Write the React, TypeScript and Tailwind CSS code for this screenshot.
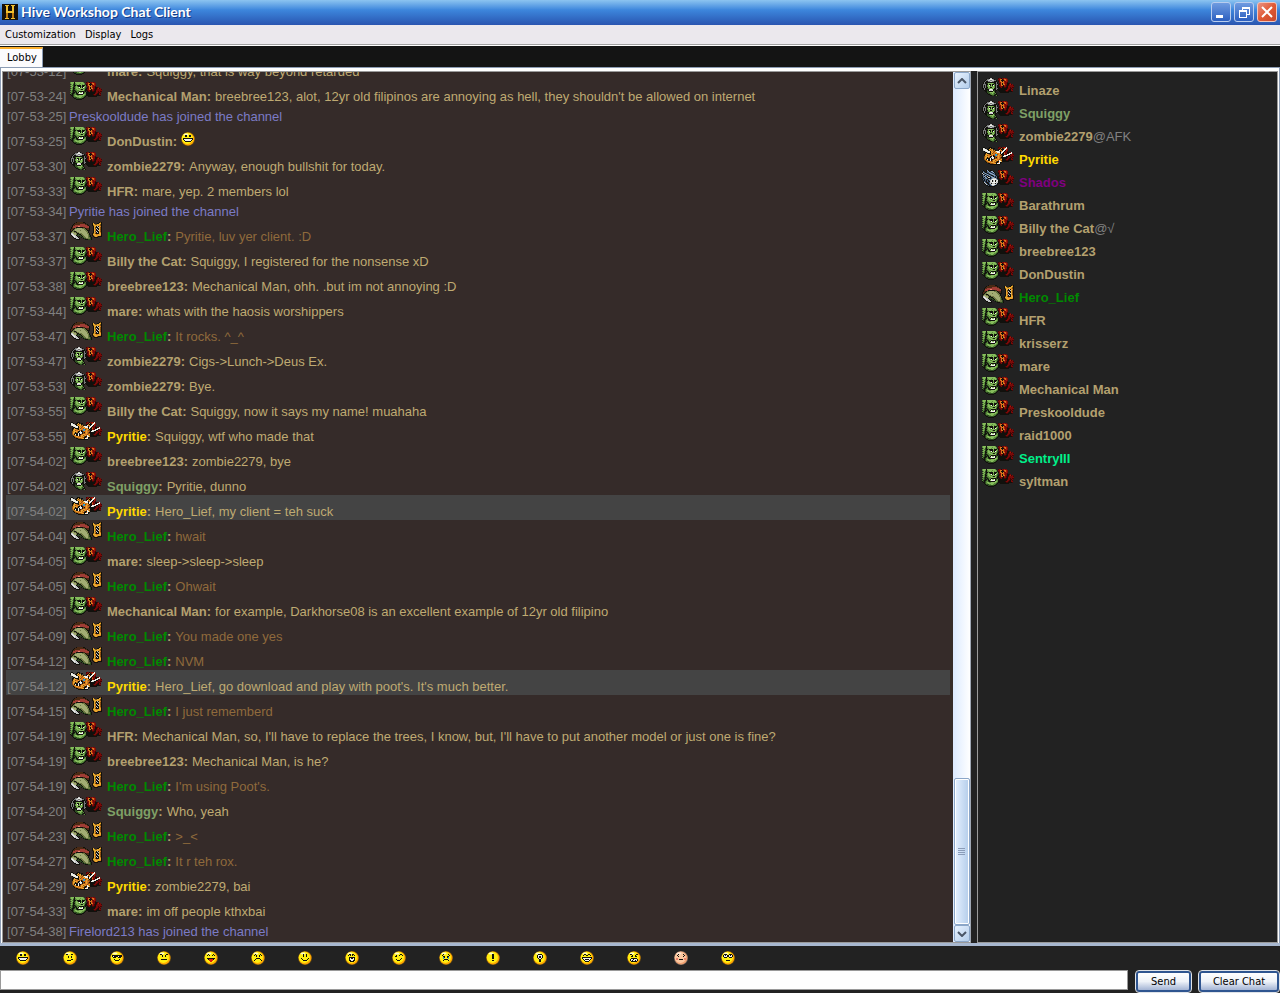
import { useState } from "react";

const palette: Record<string, string> = {
  k: "#11100c",
  g: "#5a8c3c",
  G: "#86bc5c",
  d: "#2c4a20",
  q: "#6e7a44",
  Q: "#a3ad74",
  m: "#420505",
  r: "#7a0a08",
  R: "#a81c0c",
  o: "#d9741c",
  O: "#9a4e10",
  y: "#e8a830",
  Y: "#7a5410",
  w: "#f2f2ea",
  s: "#77797a",
  S: "#c4c6c6",
  b: "#4c6482",
  B: "#92a9c4",
  n: "#1c2a40",
  p: "#a03c34",
  t: "#4a2a14",
  c: "#2a9ad0",
  e: "#e02010",
  a: "#e8806c",
};

const banner = [
  "..mrrkrrRrr.......",
  "..rrookrooRr......",
  "..mrokkkRoRr......",
  "..krookorrRr......",
  "...rroooRrrm......",
  "...mrokoRrrkkmr...",
  "..kmrokoorrkkrRmr.",
  "..krrookRrmkmrrrrm",
  "..kmrrmkrrmkrrrrrr",
  "...kmrkkmmkkrrmrmm",
  "...kkkkkkkkmrrmmr.",
  "..kkkkkkkkkrrmkrm.",
  "..kkkkkkkmrrmkkrr.",
  "...kkkkkkkmmkkkkm.",
  "....kkkkkkkkk.....",
];

const jar = [
  ".......kYk",
  "ky...kkyyk",
  "kyyYYyyyYk",
  "kYyyyyyoYk",
  ".kyykSkyok",
  ".kyYkkSyYk",
  ".kyYSkkyOk",
  ".kyokSkyYk",
  ".kyokkSyOk",
  ".kyYSkkyYk",
  ".kyokSkyok",
  "kYyYkkkyyk",
  "kyyyooyyyk",
  "kYyyyyyyok",
  ".kOyyOkkkk",
  "..kkkk....",
];

const sprites: Record<string, string[]> = {
  orc: [
    "gGGGkGGGGGGGGg....",
    "gGGgkgGGGGgGGGg...",
    ".gGdkggGGgGGgGg...",
    "gGgdkkgkkkkGkkkg..",
    ".gGdkgGgkkkgkkGg..",
    "gGgkdgGGGwkGkwGd..",
    ".ggkkgGGggGGGggd..",
    "gGgkdggGGGgkkGgk..",
    ".gdkkdgggGGGGGdk..",
    "ggdkdkdggkkkkkdk..",
    ".gdkkdkgkwGGwkdgk.",
    "gdkkdgkkGwwwwkggk.",
    "kdkdggdkkkkkkGGgk.",
    ".kkdgGGggGGGGGgdk.",
    "..kdggGGGGGGggdk..",
    "...kdddggGGggdk...",
    "....kkddddddkk....",
    "......kkkkkk......",
  ],
  grunt: [
    ".......kSSk.......",
    "....kssSwwSsk.....",
    "...kssSSssSSssk...",
    "..kskkssSSsskkk...",
    ".kskkkkkkkkkkksk..",
    ".kskkdGGGGGgkksk..",
    "kssskkGkkGkkgkssk.",
    "kskskgGwkGkwgkskk.",
    "kskskgGGgGgGgkskk.",
    "kskskkGGkkGGgkskk.",
    "kkskkdggGGgGkkssk.",
    ".kskkkkSwwSkkksk..",
    "..kkkdkwSSwkdkk...",
    "...kkddkkkkGdk....",
    "....kddgGGGGgk....",
    ".....kddggGgdgk...",
    "......kkdgggdkk...",
    "........kkddk.gk..",
  ],
  beast: [
    ".kk....kkk.........k....w.......",
    "kwSk..kkyk.kk.....k....ww.......",
    "kwwwSkkyYoyk.....k....ww........",
    ".SwwwwkYyoyYok...w...wwk........",
    "..kSwwwwkyooYywwwSk.wwk.........",
    "...kkSwwkoyOoyowwwkwwk.......w..",
    "..kkykkkkyYooOyooykwkk.....www..",
    "..kOyyoYkoyooccYoyokk....wwwk...",
    "..kyyOooyOokOccoyoYOk.wwwwkk....",
    "..YoyyyokkwkkOooyooOkwwSkk......",
    "..OyykoYkSwwkYkoyoOkkk..........",
    "..OyYkkkwkwSkOOoyoYOkk..........",
    "..YokwkkwkkOoyyooOoykk..........",
    "...YoykkwkOyyOoyOwyOk...........",
    "...kYoyyoOOyoyYkkwwyk...........",
    "....kYOooyyyoOkkowkk............",
    "......kkYOOoyykwwwk.............",
    "........kkkkkkkkkk..............",
  ],
  turtle: [
    "......kttttttkk.......",
    "....kttttttttttk......",
    "...kttttttpppppttk....",
    "..kttpppppppppppptk...",
    "..kpppppaapppppppppk..",
    ".ktpppkkkkkkkttppppk..",
    ".kttkqqQQQQQqqqktttk..",
    "kttkqQQQQQQQQQqqkttk..",
    "ktkqqQQQQQqQQQQqqkkk..",
    "kkqqkkqQQQQQQQQQqqk...",
    "kqQQqqkqqQQQQQQQQqk...",
    "kSSQQQqkkqqqQQQQQqqk..",
    "kSwSQQqkdkkqqQQQQQqk..",
    ".kSwSSkddddkqqQQQQqdk.",
    "..kSwSSk.kddkqqQQQqdk.",
    "...kSSSSk..kddqqQQqqdk",
    "....kkSSSk...kddqqqqdk",
    "......kkkk.....kkkdddk",
  ],
  wolf: [
    "nk..kBk.kk........",
    "kbk.kbBknBBk......",
    "kBbkkbbBbnbBk.....",
    "SkbBbknbBBbnbk....",
    "kSbkbBbknbBBbk....",
    "nbkBbnbBbkkbBbk...",
    "kbBbkSknbBbkbnbk..",
    "kbkBbkSSkbBBbkbk..",
    "nkbbBbkknbBSSSbk..",
    "kbkbnkbBbSwwwwSbk.",
    ".nkbkbkbSwkSwkSwk.",
    ".kbnkbnkSwkSwkwSk.",
    ".kSbkknbSSwwwwSSk.",
    "..kSbkkbSkSSSkSkk.",
    "...kSbknbSwwwSbk..",
    "....kkbknbSSbkk...",
    "......kkkkkkk.....",
  ],
};

function Pixels({ rows, x = 0, y = 0 }: { rows: string[]; x?: number; y?: number }) {
  return (
    <>
      {rows.map((row, j) =>
        [...row].map((ch, i) =>
          ch === "." ? null : (
            <rect key={`${j}-${i}`} x={x + i} y={y + j} width="1" height="1" fill={palette[ch]} />
          ),
        ),
      )}
    </>
  );
}

function Avatar({ kind }: { kind: string }) {
  return (
    <svg width="32" height="20" viewBox="0 0 32 20" shapeRendering="crispEdges" className="shrink-0">
      {kind === "turtle" ? <Pixels rows={jar} x={22} y={2} /> : <Pixels rows={banner} x={14} y={2} />}
      <Pixels rows={sprites[kind]} y={2} />
    </svg>
  );
}

// Each face is a 10px wide grid laid over a 14px ball.
const faces: { name: string; rows: string[] }[] = [
  { name: "Grin", rows: ["..kk..kk..", "..kk..kk..", "..........", "kkkkkkkkkk", "kwwwwwwwwk", ".kwwwwwwk.", "..kkkkkk.."] },
  { name: "Confused", rows: [".kk...kk..", "..........", "...k..k...", "...k..k...", "..........", "......kk..", "..kkkk...."] },
  { name: "Cool", rows: ["..........", "kkkkkkkkkk", "kwkkkkwkkk", ".kkk..kkk.", "..........", "..k....k..", "...kkkk..."] },
  { name: "Neutral", rows: [".kk....kk.", "...k..k...", "...k..k...", "..........", "..........", "..kkkkkk..", ".........."] },
  { name: "Tongue", rows: ["..k....k..", ".k.k..k.k.", "..........", "..........", ".kkkkkkkk.", "..keeeek..", "...eeee...", "....ee...."] },
  { name: "Sad", rows: ["..k....k..", ".k.k..k.k.", "...k..k...", "..........", "...kkkk...", "..k....k..", ".k......k."] },
  { name: "Smile", rows: ["...k..k...", "...k..k...", "...k..k...", "..........", ".k......k.", "..k....k..", "...kkkk..."] },
  { name: "Shout", rows: ["..kk.kk...", ".k.k.k.k..", "..........", "..kkkkkk..", "..kwkkwk..", "..kwwwwk..", "..kkwwkk..", "...kkkk..."] },
  { name: "Wink", rows: ["......kk..", "..k..k..k.", ".kk.......", "..........", ".......k..", "..k...k...", "...kkk...."] },
  { name: "Cry", rows: ["..k....k..", ".k......k.", "..kk..kk..", "..ck..kc..", "..c....c..", "...kkkk...", "..k....k.."] },
  { name: "Exclamation", rows: ["....kk....", "....kk....", "....kk....", "....kk....", "....kk....", "..........", "....kk...."] },
  { name: "Idea", rows: ["...kkkk...", "..kwwwwk..", "..kwkkwk..", "..kwkkwk..", "...kwwk...", "....kk....", "....kk....", "....kk...."] },
  { name: "Laugh", rows: ["..kk..kk..", ".k..kk..k.", "..........", "kkkkkkkkkk", "kwwwwwwwwk", ".kwkkkkwk.", "..kwwwwk..", "...kkkk..."] },
  { name: "Angry", rows: [".kk....kk.", "...k..k...", "..kk..kk..", "..........", "..kkkkkk..", ".kwwkwwwk.", ".kwkwwkwk.", "..kkkkkk.."] },
  { name: "Blush", rows: ["..k....k..", ".k......k.", "..k....k..", "..........", "aa......aa", "aa.kkkk.aa", ".........."] },
  { name: "Roll eyes", rows: [".kkk..kkk.", "kwkwkkwkwk", "kwwwkkwwwk", ".kkk..kkk.", "..........", "..........", "...kkkk..."] },
];

function Smiley({ rows, pale = false }: { rows: string[]; pale?: boolean }) {
  return (
    <svg width="14" height="14" viewBox="0 0 14 14">
      <circle cx="7" cy="7" r="7" fill={pale ? "#7a6a60" : "#6a4c14"} />
      <circle cx="7" cy="7" r="6.4" fill={pale ? "#f0a070" : "#ffa800"} />
      <circle cx="6.400" cy="6.400" r="5.600" fill={pale ? "#fcc8a0" : "#ffee10"} />
      <ellipse cx="5" cy="2.500" rx="2.500" ry="1" fill={pale ? "#ffe8d8" : "#fffcc8"} />
      <g shapeRendering="crispEdges">
        <Pixels rows={rows} x={2} y={3} />
      </g>
    </svg>
  );
}

type User = { name: string; kind?: string; color?: string; status?: string };

const TAN = "text-[#b3a06f]";
const GREEN = "text-[#7fa066]";
const GOLD = "text-[#ffd900]";
const HERO = "text-[#008a00]";

const users: User[] = [
  { name: "Linaze", kind: "grunt" },
  { name: "Squiggy", kind: "grunt", color: GREEN },
  { name: "zombie2279", kind: "grunt", status: "@AFK" },
  { name: "Pyritie", kind: "beast", color: GOLD },
  { name: "Shados", kind: "wolf", color: "text-[#800080]" },
  { name: "Barathrum" },
  { name: "Billy the Cat", status: "@√" },
  { name: "breebree123" },
  { name: "DonDustin" },
  { name: "Hero_Lief", kind: "turtle", color: HERO },
  { name: "HFR" },
  { name: "krisserz" },
  { name: "mare" },
  { name: "Mechanical Man" },
  { name: "Preskooldude" },
  { name: "raid1000" },
  { name: "SentryIII", color: "text-[#00f08a]" },
  { name: "syltman" },
];

type Line = { time: string; from?: string; text: string; marked?: boolean };

const lines: Line[] = [
  { time: "07-53-12", from: "mare", text: "Squiggy, that is way beyond retarded" },
  { time: "07-53-24", from: "Mechanical Man", text: "breebree123, alot, 12yr old filipinos are annoying as hell, they shouldn't be allowed on internet" },
  { time: "07-53-25", text: "Preskooldude has joined the channel" },
  { time: "07-53-25", from: "DonDustin", text: ":D" },
  { time: "07-53-30", from: "zombie2279", text: "Anyway, enough bullshit for today." },
  { time: "07-53-33", from: "HFR", text: "mare, yep. 2 members lol" },
  { time: "07-53-34", text: "Pyritie has joined the channel" },
  { time: "07-53-37", from: "Hero_Lief", text: "Pyritie, luv yer client. :D" },
  { time: "07-53-37", from: "Billy the Cat", text: "Squiggy, I registered for the nonsense xD" },
  { time: "07-53-38", from: "breebree123", text: "Mechanical Man, ohh. .but im not annoying :D" },
  { time: "07-53-44", from: "mare", text: "whats with the haosis worshippers" },
  { time: "07-53-47", from: "Hero_Lief", text: "It rocks. ^_^" },
  { time: "07-53-47", from: "zombie2279", text: "Cigs->Lunch->Deus Ex." },
  { time: "07-53-53", from: "zombie2279", text: "Bye." },
  { time: "07-53-55", from: "Billy the Cat", text: "Squiggy, now it says my name! muahaha" },
  { time: "07-53-55", from: "Pyritie", text: "Squiggy, wtf who made that" },
  { time: "07-54-02", from: "breebree123", text: "zombie2279, bye" },
  { time: "07-54-02", from: "Squiggy", text: "Pyritie, dunno" },
  { time: "07-54-02", from: "Pyritie", text: "Hero_Lief, my client = teh suck", marked: true },
  { time: "07-54-04", from: "Hero_Lief", text: "hwait" },
  { time: "07-54-05", from: "mare", text: "sleep->sleep->sleep" },
  { time: "07-54-05", from: "Hero_Lief", text: "Ohwait" },
  { time: "07-54-05", from: "Mechanical Man", text: "for example, Darkhorse08 is an excellent example of 12yr old filipino" },
  { time: "07-54-09", from: "Hero_Lief", text: "You made one yes" },
  { time: "07-54-12", from: "Hero_Lief", text: "NVM" },
  { time: "07-54-12", from: "Pyritie", text: "Hero_Lief, go download and play with poot's. It's much better.", marked: true },
  { time: "07-54-15", from: "Hero_Lief", text: "I just rememberd" },
  { time: "07-54-19", from: "HFR", text: "Mechanical Man, so, I'll have to replace the trees, I know, but, I'll have to put another model or just one is fine?" },
  { time: "07-54-19", from: "breebree123", text: "Mechanical Man, is he?" },
  { time: "07-54-19", from: "Hero_Lief", text: "I'm using Poot's." },
  { time: "07-54-20", from: "Squiggy", text: "Who, yeah" },
  { time: "07-54-23", from: "Hero_Lief", text: ">_<" },
  { time: "07-54-27", from: "Hero_Lief", text: "It r teh rox." },
  { time: "07-54-29", from: "Pyritie", text: "zombie2279, bai" },
  { time: "07-54-33", from: "mare", text: "im off people kthxbai" },
  { time: "07-54-38", text: "Firelord213 has joined the channel" },
];

function ChatLine({ line }: { line: Line }) {
  if (!line.from) {
    return (
      <li className="flex h-5 shrink-0 items-end leading-4 whitespace-nowrap">
        <span className="w-[63px] pl-px text-[#808080]">[{line.time}]</span>
        <span className="text-[#7b7bc6]">{line.text}</span>
      </li>
    );
  }
  const user = users.find((u) => u.name === line.from);
  return (
    <li
      className={`flex h-[25px] shrink-0 items-end leading-4 whitespace-nowrap ${line.marked ? "bg-[#444444]" : ""}`}
    >
      <span className="w-16 pl-px text-[#808080]">[{line.time}]</span>
      <span className="mr-[5px] self-start">
        <Avatar kind={user?.kind ?? "orc"} />
      </span>
      <b className={`mr-1 ${TAN}`}>
        <span className={user?.color}>{line.from}</span>:
      </b>
      {line.text === ":D" ? (
        <span className="pb-1">
          <Smiley rows={faces[0].rows} />
        </span>
      ) : (
        <span className={line.from === "Hero_Lief" ? "text-[#8f6a3c]" : "text-[#bfaa72]"}>{line.text}</span>
      )}
    </li>
  );
}

function TitleBar() {
  const button =
    "flex size-5 items-center justify-center rounded-[3px] border border-[#b9cdee] bg-linear-to-b from-[#6f9be0] to-[#2c5fc0]";
  return (
    <header className="flex h-[25px] shrink-0 items-center bg-linear-to-b from-[#8cc4f0] via-[#3d86dc] via-40% to-[#2a55b0] pr-[3px] pb-[2px] pl-[2px]">
      <svg width="16" height="16" viewBox="0 0 16 16" shapeRendering="crispEdges">
        <rect width="16" height="16" fill="#14100a" />
        <path d="M3 1h4v1h-1v5h4v-5h-1v-1h4v1h-1v12h1v1h-4v-1h1v-5h-4v5h1v1h-4v-1h1v-12h-1z" fill="#f0c030" />
        <path d="M4 9h2v5h-2zM10 9h2v5h-2z" fill="#c07a10" />
      </svg>
      <h1 className="ml-[3px] font-['Lato'] text-sm font-bold text-white [text-shadow:1px_1px_0_#123a86]">
        Hive Workshop Chat Client
      </h1>
      <div className="ml-auto flex gap-[3px]">
        <button aria-label="Minimize" className={button}>
          <svg width="16" height="16" viewBox="0 0 16 16">
            <path d="M3 11h7v3h-7z" fill="#fff" />
          </svg>
        </button>
        <button aria-label="Restore" className={button}>
          <svg width="16" height="16" viewBox="0 0 16 16" fill="#fff">
            <path d="M6 3h8v8h-3v-1h2v-5h-6v1h-1z" />
            <path d="M3 6h8v8h-8zM4 8v5h6v-5z" fillRule="evenodd" />
          </svg>
        </button>
        <button
          aria-label="Close"
          className="flex size-5 items-center justify-center rounded-[3px] border border-[#f0c4bc] bg-linear-to-br from-[#e89080] via-[#e05a34] to-[#c8482c]"
        >
          <svg width="16" height="16" viewBox="0 0 16 16" stroke="#fff" strokeWidth="2">
            <path d="M3 3l10 10M13 3l-10 10" />
          </svg>
        </button>
      </div>
    </header>
  );
}

function ScrollBar() {
  const arrow =
    "flex h-[17px] w-4 shrink-0 items-center justify-center rounded-[2px] border border-[#8ba6c8] bg-linear-to-br from-[#e8f2ff] to-[#b4cdea]";
  return (
    <div className="flex w-[18px] shrink-0 flex-col items-center border-r border-[#a0a8b4] bg-linear-to-r from-[#dceaff] to-white">
      <button aria-label="Scroll up" className={arrow}>
        <svg width="10" height="6" viewBox="0 0 10 6" fill="none" stroke="#4a5566" strokeWidth="2">
          <path d="M1 5l4-4 4 4" />
        </svg>
      </button>
      <div className="grow" />
      <div className="flex h-[147px] w-4 shrink-0 flex-col items-center justify-center gap-px rounded-[2px] border border-[#8ba6c8] bg-linear-to-r from-[#e4f0ff] to-[#b4cdea] shadow-[inset_0_0_0_1px_#ffffff]">
        {[0, 1, 2, 3].map((i) => (
          <i key={i} className="h-px w-[7px] bg-[#8a9cb8]" />
        ))}
      </div>
      <button aria-label="Scroll down" className={arrow}>
        <svg width="10" height="6" viewBox="0 0 10 6" fill="none" stroke="#4a5566" strokeWidth="2">
          <path d="M1 1l4 4 4-4" />
        </svg>
      </button>
    </div>
  );
}

export default function App() {
  const [draft, setDraft] = useState("");
  const push =
    "rounded-[3px] border-2 border-[#2f5590] bg-linear-to-b from-white via-[#eef2f8] to-[#a4b4d4] pt-px outline outline-[#dfe3e8]";

  return (
    <div className="flex h-screen flex-col overflow-hidden bg-[#222222] font-['DejaVu_Sans_Condensed','Noto_Sans',sans-serif] text-[11px] text-black">
      <TitleBar />
      <nav className="flex h-5 shrink-0 items-center gap-[9px] border-b border-[#a0a0a0] bg-[#ebe8ed] pt-px pl-[5px]">
        {["Customization", "Display", "Logs"].map((item) => (
          <button key={item}>{item}</button>
        ))}
      </nav>
      <div className="flex h-[22px] shrink-0 items-end border-t border-white bg-[#141414]">
        <button className="h-5 border-t-2 border-r border-[#8c9cb4] border-t-[#fcb030] bg-[#fbfbfd] pr-[5px] pl-[7px] leading-4">
          Lobby
        </button>
      </div>

      <main className="flex min-h-0 grow flex-col border-x border-t border-[#8c9cb4] bg-white">
        <div className="flex min-h-0 grow border-t-[3px] border-r border-l border-white bg-[#222222] font-['Liberation_Sans',sans-serif] text-[13px]">
          <section className="flex min-w-0 grow border-t border-b border-l border-[#9a9a9a] bg-[#352b29]">
            <ul className="flex min-w-0 grow flex-col justify-end overflow-hidden px-[3px] pb-[2px]">
              {lines.map((line, i) => (
                <ChatLine key={i} line={line} />
              ))}
            </ul>
            <ScrollBar />
          </section>
          <aside className="ml-[6px] w-[301px] shrink-0 border border-[#9a9a9a] pt-1 pl-1">
            <ul>
              {users.map((u) => (
                <li key={u.name} className="flex h-[23px] items-end">
                  <span className="mr-[5px] self-start">
                    <Avatar kind={u.kind ?? "orc"} />
                  </span>
                  <b className={`leading-4 ${u.color ?? TAN}`}>{u.name}</b>
                  {u.status && <span className="leading-4 text-[#808080]">{u.status}</span>}
                </li>
              ))}
            </ul>
          </aside>
        </div>
      </main>

      <div className="flex h-[27px] shrink-0 gap-[33px] border-t-[3px] border-[#a8b8d0] pl-4">
        {faces.map((f) => (
          <button key={f.name} aria-label={f.name} className="flex items-center">
            <Smiley rows={f.rows} pale={f.name === "Blush"} />
          </button>
        ))}
      </div>
      <form className="flex h-[23px] shrink-0 gap-2 pr-px" onSubmit={(e) => e.preventDefault()}>
        <input
          aria-label="Message"
          value={draft}
          onChange={(e) => setDraft(e.target.value)}
          className="h-5 min-w-0 grow border border-[#9a9a9a] bg-white px-1"
        />
        <button className={`my-px w-[55px] ${push}`}>Send</button>
        <button type="button" className={`my-px w-20 ${push}`}>
          Clear Chat
        </button>
      </form>
    </div>
  );
}
